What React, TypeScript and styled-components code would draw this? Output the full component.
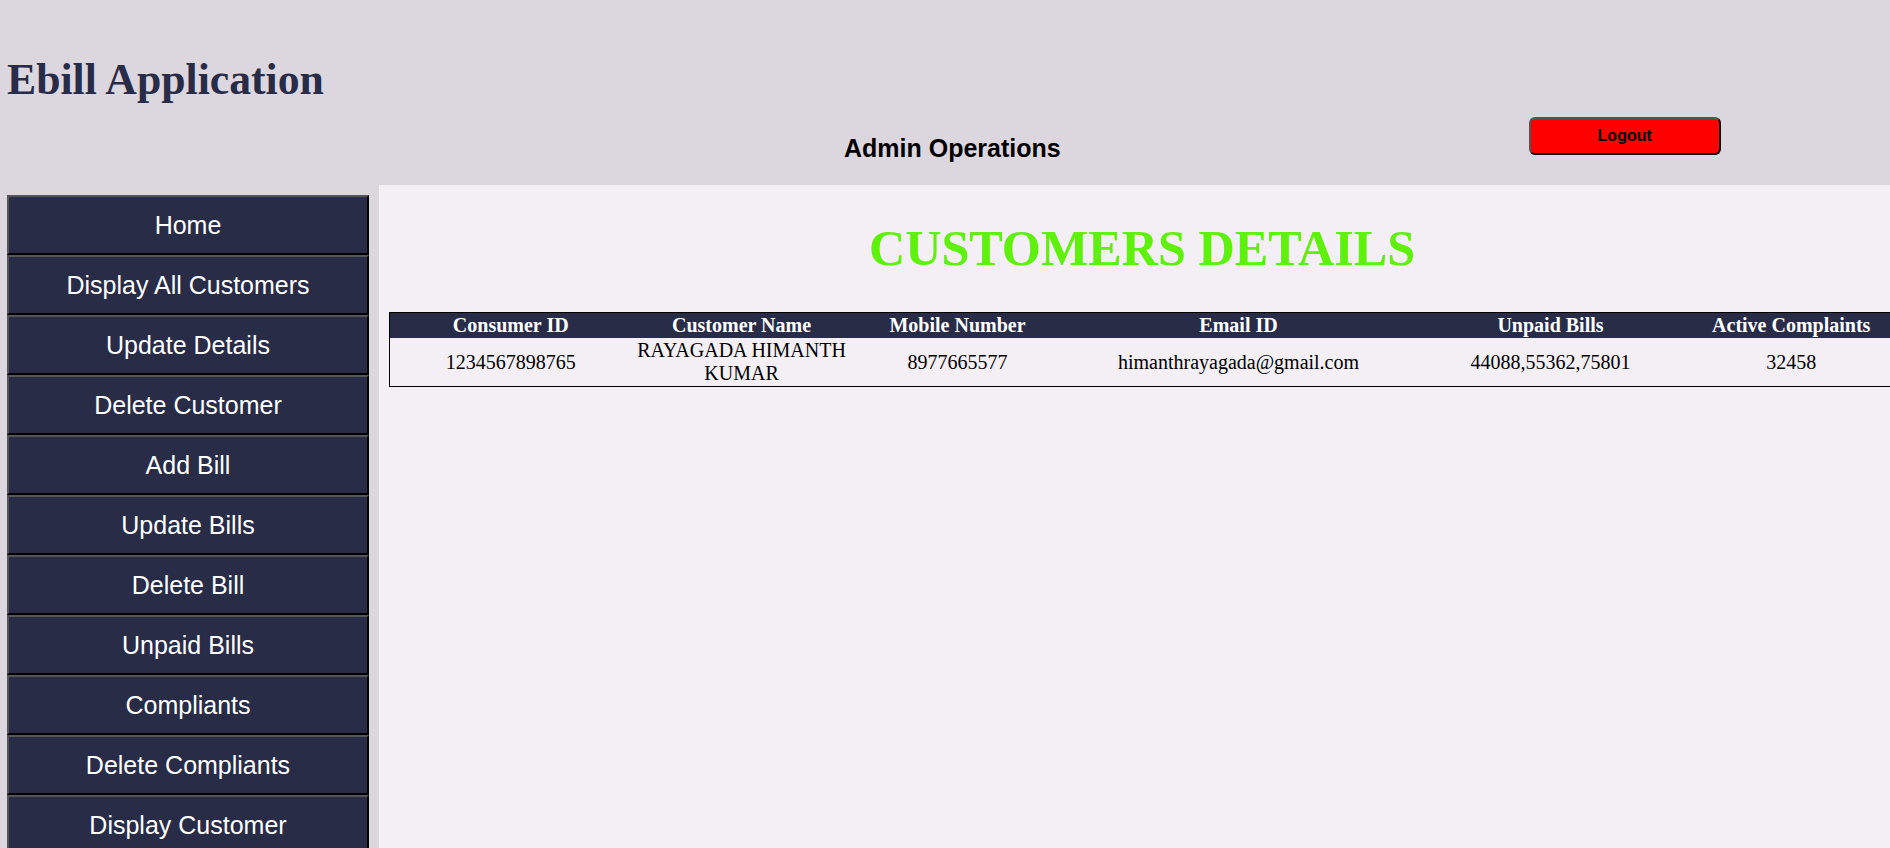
import React from "react";
import styled, { createGlobalStyle } from "styled-components";

const GlobalStyle = createGlobalStyle`
  html, body {
    margin: 0;
    padding: 0;
    background: #dcd6de;
  }
  body {
    font-family: "Liberation Serif", "Times New Roman", serif;
    overflow: hidden;
  }
`;

const Page = styled.div`
  min-height: 848px;
  background: #dcd6de;
  display: flex;
  flex-direction: column;
`;

const Header = styled.header`
  padding: 54px 0 23px 7px;
`;

const Title = styled.h1`
  margin: 0;
  font: bold 43.7px/50px "Liberation Serif", "Times New Roman", serif;
  color: #292c47;
`;

const SubRow = styled.div`
  display: flex;
  align-items: flex-start;
  margin-top: 13px;
  padding-left: 837px;
  gap: 468px;
`;

const SubHeading = styled.h2`
  margin: 17px 0 0;
  font: bold 25px/28px "Liberation Sans", Arial, sans-serif;
  color: #000;
`;

const LogoutButton = styled.button`
  width: 192px;
  height: 38px;
  box-sizing: border-box;
  background: #ff0000;
  border: 2px solid;
  border-color: #555 #000 #000 #555;
  border-radius: 6px;
  font: bold 16px "Liberation Sans", Arial, sans-serif;
  color: #000;
  padding: 0;
  cursor: pointer;
`;

const Body = styled.div`
  display: flex;
  flex: 1;
  align-items: stretch;
`;

const Sidebar = styled.nav`
  width: 362px;
  flex-shrink: 0;
  padding: 10px 0 0 7px;
  display: flex;
  flex-direction: column;
`;

const NavButton = styled.button`
  height: 60px;
  width: 100%;
  box-sizing: border-box;
  background: #292c47;
  color: #fff;
  border: 2px solid;
  border-color: #555 #000 #000 #555;
  font: 25px "Liberation Sans", Arial, sans-serif;
  padding: 0;
  text-align: center;
  cursor: pointer;
  flex-shrink: 0;
`;

const Main = styled.main`
  flex: 1;
  min-width: 0;
  margin-left: 10px;
  background: #f3eff5;
  overflow: hidden;
`;

const Content = styled.section`
  width: 1506px;
  margin-left: 10px;
`;

const PageTitle = styled.h1`
  margin: 35px 0 35px;
  text-align: center;
  font: bold 50.2px/57px "Liberation Serif", "Times New Roman", serif;
  color: #5ef10b;
`;

const Table = styled.table`
  width: 1506px;
  table-layout: fixed;
  border-collapse: collapse;
  border: 1px solid #000;
`;

const Th = styled.th`
  background: #292c47;
  color: #fff;
  font: bold 20px/23px "Liberation Serif", "Times New Roman", serif;
  padding: 1px 2px;
  text-align: center;
  white-space: nowrap;
`;

const Td = styled.td`
  color: #000;
  font: 20px/23px "Liberation Serif", "Times New Roman", serif;
  padding: 1px 1px;
  text-align: center;
`;

const navItems = [
  "Home",
  "Display All Customers",
  "Update Details",
  "Delete Customer",
  "Add Bill",
  "Update Bills",
  "Delete Bill",
  "Unpaid Bills",
  "Compliants",
  "Delete Compliants",
  "Display Customer",
];

const columns = [
  { label: "Consumer ID", width: 242 },
  { label: "Customer Name", width: 220 },
  { label: "Mobile Number", width: 212 },
  { label: "Email ID", width: 350 },
  { label: "Unpaid Bills", width: 274 },
  { label: "Active Complaints", width: 208 },
];

const rows = [
  [
    "1234567898765",
    "RAYAGADA HIMANTH KUMAR",
    "8977665577",
    "himanthrayagada@gmail.com",
    "44088,55362,75801",
    "32458",
  ],
];

export default function App() {
  return (
    <>
      <GlobalStyle />
      <Page>
        <Header>
          <Title>Ebill Application</Title>
          <SubRow>
            <SubHeading>Admin Operations</SubHeading>
            <LogoutButton>Logout</LogoutButton>
          </SubRow>
        </Header>
        <Body>
          <Sidebar>
            {navItems.map((item) => (
              <NavButton key={item}>{item}</NavButton>
            ))}
          </Sidebar>
          <Main>
            <Content>
              <PageTitle>CUSTOMERS DETAILS</PageTitle>
              <Table>
                <colgroup>
                  {columns.map((c) => (
                    <col key={c.label} style={{ width: c.width }} />
                  ))}
                </colgroup>
                <thead>
                  <tr>
                    {columns.map((c) => (
                      <Th key={c.label}>{c.label}</Th>
                    ))}
                  </tr>
                </thead>
                <tbody>
                  {rows.map((r) => (
                    <tr key={r[0]}>
                      {r.map((cell, i) => (
                        <Td key={i}>{cell}</Td>
                      ))}
                    </tr>
                  ))}
                </tbody>
              </Table>
            </Content>
          </Main>
        </Body>
      </Page>
    </>
  );
}
